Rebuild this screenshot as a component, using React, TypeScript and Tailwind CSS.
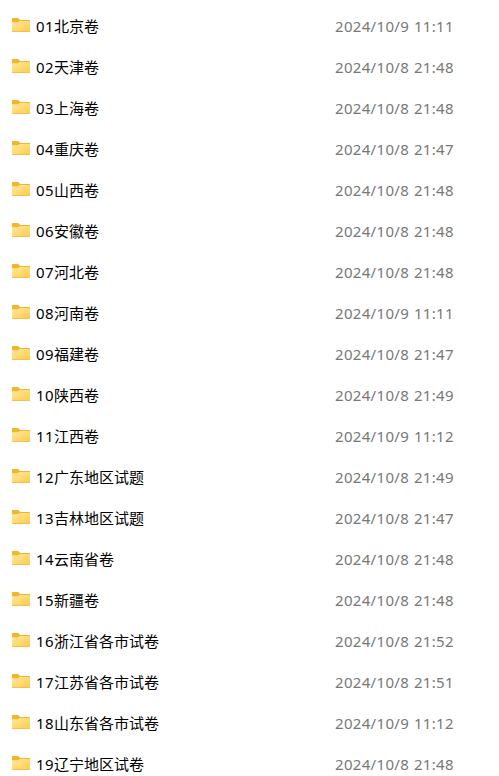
const rows: [string, string, string][] = [
  ["01", "北京卷", "2024/10/9 11:11"],
  ["02", "天津卷", "2024/10/8 21:48"],
  ["03", "上海卷", "2024/10/8 21:48"],
  ["04", "重庆卷", "2024/10/8 21:47"],
  ["05", "山西卷", "2024/10/8 21:48"],
  ["06", "安徽卷", "2024/10/8 21:48"],
  ["07", "河北卷", "2024/10/8 21:48"],
  ["08", "河南卷", "2024/10/9 11:11"],
  ["09", "福建卷", "2024/10/8 21:47"],
  ["10", "陕西卷", "2024/10/8 21:49"],
  ["11", "江西卷", "2024/10/9 11:12"],
  ["12", "广东地区试题", "2024/10/8 21:49"],
  ["13", "吉林地区试题", "2024/10/8 21:47"],
  ["14", "云南省卷", "2024/10/8 21:48"],
  ["15", "新疆卷", "2024/10/8 21:48"],
  ["16", "浙江省各市试卷", "2024/10/8 21:52"],
  ["17", "江苏省各市试卷", "2024/10/8 21:51"],
  ["18", "山东省各市试卷", "2024/10/9 11:12"],
  ["19", "辽宁地区试卷", "2024/10/8 21:48"],
];

function FolderIcon() {
  return (
    <svg width="18" height="16" viewBox="0 0 18 16" className="mb-[2px] shrink-0">
      <defs>
        <linearGradient id="folder" x1="0" y1="0" x2="1" y2="1">
          <stop offset="0" stopColor="#ffe8a3" />
          <stop offset="1" stopColor="#ffcb45" />
        </linearGradient>
      </defs>
      <path d="M0 .6Q0 0 .6 0H5.8Q6.4 0 6.8 .5L8.2 2H17.4Q18 2 18 2.6V8H0Z" fill="#f0b62c" />
      <path d="M0 4.2H5.6Q6.3 4.2 6.8 3.8L7.8 3H17.3Q18 3 18 3.7V13.2Q18 14 17.2 14H.8Q0 14 0 13.2Z" fill="url(#folder)" />
      <path d="M0 13Q0 14 .8 14H17.2Q18 14 18 13Z" fill="#f3c04f" />
    </svg>
  );
}

export default function App() {
  return (
    <main className="h-[776px] w-[499px] overflow-hidden bg-white pt-[6px] font-['Noto_Sans','Noto_Sans_CJK_SC',sans-serif] text-[15px]">
      {rows.map(([number, name, date]) => (
        <div key={number} className="flex h-[41px] items-center pl-3">
          <FolderIcon />
          <span className="ml-1.5 w-[299px] shrink-0 whitespace-nowrap text-black">
            <span className="tracking-[0.4px]">{number}</span>
            {name}
          </span>
          <span className="whitespace-nowrap tracking-[0.32px] text-[#787878] [word-spacing:0.6px]">{date}</span>
        </div>
      ))}
    </main>
  );
}
